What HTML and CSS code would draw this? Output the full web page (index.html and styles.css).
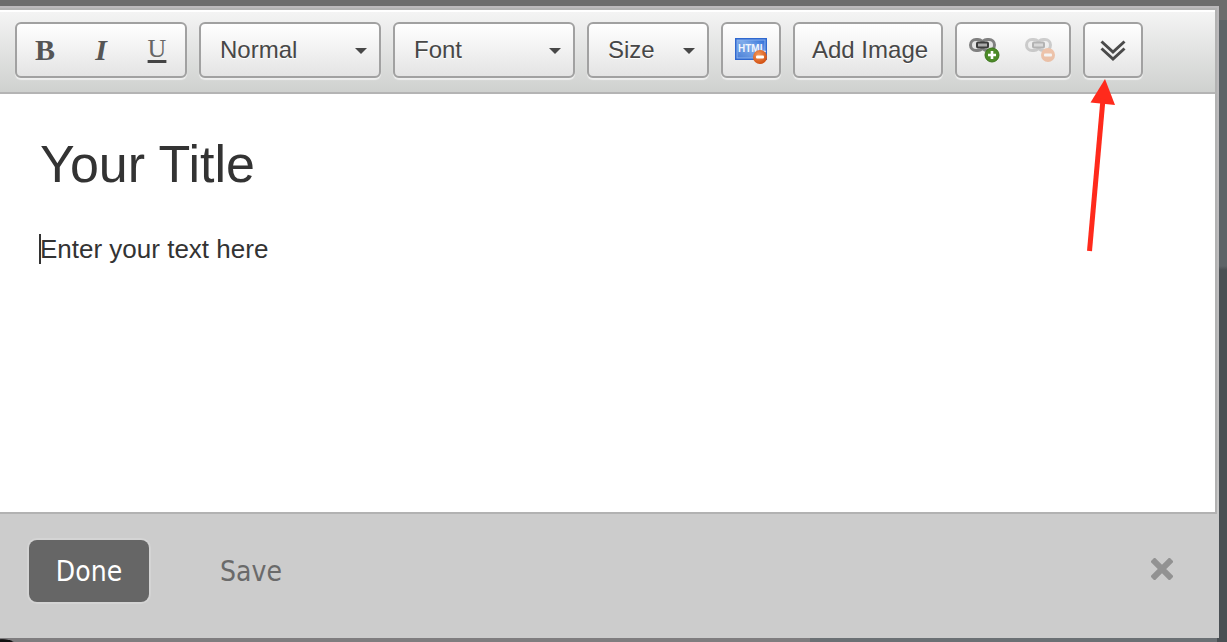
FILE: index.html
```
<!DOCTYPE html>
<html lang="en">
<head>
  <meta charset="UTF-8">
  <meta name="viewport" content="width=device-width, initial-scale=1.0">
  <title>Text Editor</title>
  <link rel="stylesheet" href="styles.css">
</head>
<body>
  <div class="dialog">
    <div class="frame">
      <div class="editor">
        <div class="toolbar">
          <div class="group">
            <button class="tool bold" aria-label="Bold">B</button>
            <button class="tool italic" aria-label="Italic">I</button>
            <button class="tool underline" aria-label="Underline">U</button>
          </div>
          <div class="group dropdown">
            <select aria-label="Paragraph format"><option>Normal</option></select>
          </div>
          <div class="group dropdown">
            <select aria-label="Font name"><option>Font</option></select>
          </div>
          <div class="group dropdown small">
            <select aria-label="Font size"><option>Size</option></select>
          </div>
          <div class="group">
            <button class="tool" aria-label="Edit source">
              <svg width="32" height="28" viewBox="0 0 32 28">
                <defs>
                  <linearGradient id="blue" x1="0" y1="1" x2="1" y2="0">
                    <stop offset="0" stop-color="#4a7fd6"/>
                    <stop offset=".55" stop-color="#7fabea"/>
                    <stop offset="1" stop-color="#2b6bd8"/>
                  </linearGradient>
                  <radialGradient id="orange" cx=".4" cy=".35" r=".7">
                    <stop offset="0" stop-color="#f59a5c"/>
                    <stop offset="1" stop-color="#cf4a0c"/>
                  </radialGradient>
                </defs>
                <rect y="2" width="32" height="22" fill="#2f68cf"/>
                <rect x="2" y="4" width="28" height="18" fill="url(#blue)" stroke="#8ab2ee"/>
                <text class="html-text" x="3" y="16">HTML</text>
                <circle cx="25" cy="21" r="7" fill="url(#orange)"/>
                <rect x="21" y="19.5" width="8" height="3" rx="1" fill="#fff"/>
              </svg>
            </button>
          </div>
          <div class="group">
            <button class="add-image">Add Image</button>
          </div>
          <div class="group">
            <button class="tool" aria-label="Insert link">
              <svg width="32" height="28" viewBox="0 0 32 28">
                <rect x="1.500" y="3.500" width="13" height="11" rx="5.500" fill="#e4e4e4" stroke="#808080" stroke-width="3"/>
                <rect x="12.500" y="3.500" width="13" height="11" rx="5.500" fill="#e4e4e4" stroke="#808080" stroke-width="3"/>
                <rect x="8" y="6.500" width="11" height="5" rx="1" fill="#aaa" stroke="#3c3c3c" stroke-width="2"/>
                <circle cx="23" cy="19" r="7" fill="#4c8a27" stroke="#3b751b"/>
                <path d="M23 15v8M19 19h8" stroke="#fff" stroke-width="2.6"/>
              </svg>
            </button>
            <button class="tool" aria-label="Remove link" disabled>
              <svg width="32" height="28" viewBox="0 0 32 28">
                <rect x="1.500" y="3.500" width="13" height="11" rx="5.500" fill="#e4e4e4" stroke="#808080" stroke-width="3"/>
                <rect x="12.500" y="3.500" width="13" height="11" rx="5.500" fill="#e4e4e4" stroke="#808080" stroke-width="3"/>
                <rect x="8" y="6.500" width="11" height="5" rx="1" fill="#aaa" stroke="#3c3c3c" stroke-width="2"/>
                <circle cx="23" cy="19" r="7" fill="#e8702a"/>
                <rect x="19" y="17.5" width="8" height="3" rx="1" fill="#fff"/>
              </svg>
            </button>
          </div>
          <div class="group more">
            <button class="tool" aria-label="More tools">
              <svg width="28" height="24" viewBox="0 0 28 24" fill="none" stroke="#4a4a4a" stroke-width="3">
                <path d="M2.500 3.500L14 14L25.500 3.500"/>
                <path d="M2.500 10.500L14 21L25.500 10.500"/>
              </svg>
            </button>
            <svg class="arrow" width="32" height="176" viewBox="0 0 32 176" fill="#ff2a1c">
              <path d="M18 0L28 26L3.500 23.500Z"/>
              <path d="M16 20L2.500 172" stroke="#ff2a1c" stroke-width="5"/>
            </svg>
          </div>
        </div>
        <div class="content" contenteditable="true">
          <h1>Your Title</h1>
          <p><span class="caret"></span>Enter your text here</p>
        </div>
      </div>
    </div>
    <div class="footer">
      <button class="done">Done</button>
      <button class="save">Save</button>
      <button class="close" aria-label="Close">
        <svg width="22" height="22" viewBox="0 0 22 22" stroke="#929292" stroke-width="6">
          <path d="M1.500 1.500L20.500 20.500M20.500 1.500L1.500 20.500"/>
        </svg>
      </button>
    </div>
  </div>
</body>
</html>
```

FILE: styles.css
```
* {
  box-sizing: border-box;
}
body {
  margin: 0;
  min-height: 100vh;
  padding: 6px 8px 4px 0;
  display: flex;
  flex-direction: column;
  font-family: "Liberation Sans", Arial, sans-serif;
  color: #333;
  /* dimmed page behind the dialog */
  background:
    radial-gradient(ellipse 12px 3px at 2px 100%, #111 80%, transparent) no-repeat,
    linear-gradient(#6c6c6c, #6c6c6c) top / 100% 20px no-repeat,
    linear-gradient(#5d6367 266px, #4a4f53 270px) right / 10px 100% no-repeat,
    linear-gradient(to right, #7f7d7f 66%, #6b7074 66%);
}
button, select {
  margin: 0;
  padding: 0;
  border: none;
  background: none;
  font-family: inherit;
  color: inherit;
  cursor: pointer;
}
.dialog {
  flex: 1;
  display: flex;
  flex-direction: column;
  background: #ccc;
}
.frame {
  flex: 1;
  display: flex;
  padding: 2px 2px 0 0;
  background: linear-gradient(#bbb9bb, #bebebe 90%, #ccc);
}
.editor {
  flex: 1;
  display: flex;
  flex-direction: column;
  border: 2px solid #b2b2b2;
  border-left: none;
  background: #fff;
}

/* Toolbar */
.toolbar {
  display: flex;
  flex-wrap: wrap;
  gap: 12px;
  padding: 10px 15px 14px;
  border-top: 2px solid #fff;
  border-bottom: 2px solid #b4b4b4;
  background: linear-gradient(#f4f4f4, #cfd1cf);
}
.group {
  display: flex;
  height: 56px;
  border: 2px solid #a1a1a1;
  border-radius: 6px;
  background: linear-gradient(#fff, #e4e4e4);
  box-shadow: 0 2px 1px rgba(255, 255, 255, 0.6);
}
.tool {
  width: 56px;
  display: flex;
  align-items: center;
  justify-content: center;
  font-family: "Liberation Serif", "Times New Roman", serif;
  font-size: 30px;
  color: #555;
}
.tool:disabled {
  opacity: 0.35;
}
.bold {
  font-weight: bold;
}
.italic {
  font-weight: bold;
  font-style: italic;
}
.underline {
  font-size: 26px;
  color: #666;
  text-decoration: underline #444 3px;
  text-underline-offset: 3px;
  padding-bottom: 2px;
}
.dropdown {
  position: relative;
  width: 182px;
}
.dropdown.small {
  width: 122px;
}
.dropdown select {
  appearance: none;
  width: 100%;
  padding: 0 30px 2px 19px;
  font-size: 24px;
  color: #474747;
  text-shadow: 0 1px 0 #fff;
}
.dropdown::after {
  content: "";
  position: absolute;
  top: 24px;
  right: 12px;
  border: 6px solid transparent;
  border-top-color: #474747;
  border-bottom: none;
  pointer-events: none;
}
.add-image {
  padding: 0 13px 0 17px;
  font-size: 24px;
  color: #474747;
  text-shadow: 0 1px 0 #fff;
}
.html-text {
  font-family: "Liberation Sans", Arial, sans-serif;
  font-size: 10px;
  font-weight: bold;
  fill: #f0f5fd;
}
.more {
  position: relative;
}
.arrow {
  position: absolute;
  top: 55px;
  left: 2px;
  pointer-events: none;
}

/* Editing area */
.content {
  flex: 1;
  padding: 40px;
  outline: none;
}
.content h1 {
  margin: 0 0 40px;
  font-size: 52px;
  line-height: 60px;
  font-weight: normal;
}
.content p {
  position: relative;
  margin: 0;
  font-size: 26px;
  line-height: 30px;
}
.caret {
  position: absolute;
  left: -1px;
  width: 2px;
  height: 30px;
  background: #333;
}

/* Footer */
.footer {
  display: flex;
  align-items: center;
  gap: 42px;
  padding: 26px 46px 36px 29px;
  font-family: "DejaVu Sans Condensed", Tahoma, "DejaVu Sans", sans-serif;
}
.done, .save {
  width: 120px;
  height: 62px;
  border-radius: 8px;
  font-size: 28px;
}
.done {
  background: #666;
  color: #fff;
  box-shadow: 0 0 0 2px #d4d4d4;
}
.save {
  color: #6a6a6a;
}
.close {
  display: flex;
  margin-left: auto;
  padding-bottom: 4px;
}
```
